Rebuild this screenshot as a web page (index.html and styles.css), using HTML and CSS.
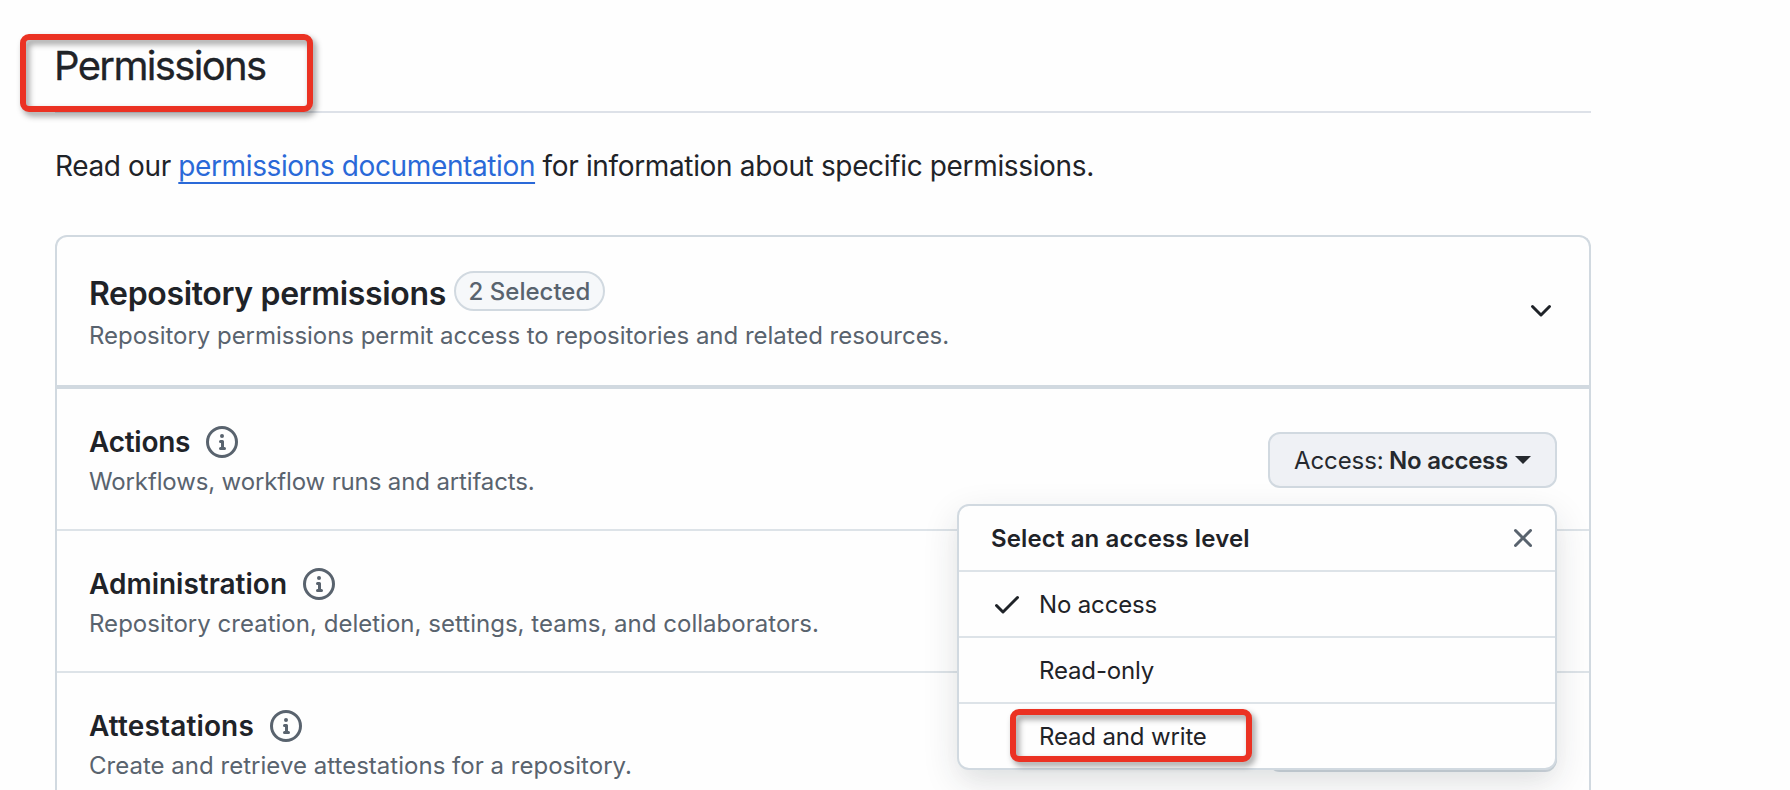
FILE: index.html
```
<!DOCTYPE html>
<html lang="en">
<head>
<meta charset="utf-8">
<title>Permissions</title>
<link rel="stylesheet" href="styles.css">
</head>
<body>
<svg class="sprite" aria-hidden="true">
  <symbol id="info" viewBox="0 0 16 16"><path d="M0 8a8 8 0 1 1 16 0A8 8 0 0 1 0 8Zm8-6.5a6.5 6.5 0 1 0 0 13 6.5 6.5 0 0 0 0-13ZM6.5 7.75A.75.75 0 0 1 7.25 7h1a.75.75 0 0 1 .75.75v2.75h.25a.75.75 0 0 1 0 1.5h-2a.75.75 0 0 1 0-1.5h.25v-2h-.25a.75.75 0 0 1-.75-.75ZM8 6a1 1 0 1 1 0-2 1 1 0 0 1 0 2Z"/></symbol>
  <symbol id="chevron" viewBox="0 0 16 16"><path d="M12.78 5.22a.749.749 0 0 1 0 1.06l-4.25 4.25a.749.749 0 0 1-1.06 0L3.22 6.28a.749.749 0 1 1 1.06-1.06L8 8.939l3.72-3.719a.749.749 0 0 1 1.06 0Z"/></symbol>
  <symbol id="check" viewBox="0 0 16 16"><path d="M13.78 4.22a.75.75 0 0 1 0 1.06l-7.25 7.25a.75.75 0 0 1-1.06 0L2.22 9.28a.751.751 0 0 1 .018-1.042.751.751 0 0 1 1.042-.018L6 10.94l6.72-6.72a.75.75 0 0 1 1.06 0Z"/></symbol>
  <symbol id="close" viewBox="0 0 16 16"><path d="M3.72 3.72a.75.75 0 0 1 1.06 0L8 6.94l3.22-3.22a.749.749 0 0 1 1.275.326.749.749 0 0 1-.215.734L9.06 8l3.22 3.22a.749.749 0 0 1-.326 1.275.749.749 0 0 1-.734-.215L8 9.06l-3.22 3.22a.751.751 0 0 1-1.042-.018.751.751 0 0 1-.018-1.042L6.94 8 3.72 4.78a.75.75 0 0 1 0-1.06Z"/></symbol>
</svg>
<main class="page">
  <header class="subhead">
    <h2 class="subhead-title">Permissions</h2>
    <span class="mark mark-title"></span>
  </header>
  <p class="intro">Read our <a class="link" href="#">permissions documentation</a><span class="intro-rest"> for information about specific permissions.</span></p>
  <section class="card">
    <div class="card-head">
      <div class="card-text">
        <div class="card-title-row"><h3 class="card-title">Repository permissions</h3><span class="badge">2 Selected</span></div>
        <p class="desc">Repository permissions permit access to repositories and related resources.</p>
      </div>
      <svg class="icon chevron"><use href="#chevron"/></svg>
    </div>
    <div class="row">
      <div>
        <div class="row-title tight">Actions<svg class="icon"><use href="#info"/></svg></div>
        <p class="desc tight">Workflows, workflow runs and artifacts.</p>
      </div>
      <div class="access">
        <button class="button"><span class="label">Access:</span><b class="value">No access</b><i class="caret"></i></button>
        <div class="menu">
          <div class="menu-head"><b class="menu-title">Select an access level</b><svg class="icon"><use href="#close"/></svg></div>
          <div class="item"><svg class="check"><use href="#check"/></svg>No access</div>
          <div class="item"><span class="check"></span>Read-only</div>
          <div class="item"><span class="check"></span>Read and write<span class="mark mark-item"></span></div>
        </div>
      </div>
    </div>
    <div class="row">
      <div>
        <div class="row-title">Administration<svg class="icon"><use href="#info"/></svg></div>
        <p class="desc loose">Repository creation, deletion, settings, teams, and collaborators.</p>
      </div>
      <div class="access"><button class="button"></button></div>
    </div>
    <div class="row">
      <div>
        <div class="row-title wide">Attestations<svg class="icon"><use href="#info"/></svg></div>
        <p class="desc loose">Create and retrieve attestations for a repository.</p>
      </div>
      <div class="access"><button class="button"></button></div>
    </div>
  </section>
</main>
</body>
</html>
```
FILE: styles.css
```
* { box-sizing: border-box; }
html, body { height: 100%; overflow: hidden; }
body { margin: 0; background: #fefefe; color: #1f2328; font-family: Inter, "Liberation Sans", sans-serif; font-size: 24px; }
h2, h3, p { margin: 0; }
.sprite { position: absolute; width: 0; height: 0; }
.icon { width: 32px; height: 32px; fill: #59636e; flex: none; }
.page { width: 1536px; height: 790px; margin-left: 55px; }
.subhead { position: relative; height: 113px; border-bottom: 2px solid #dde1e8; }
.subhead-title { margin-left: -1px; padding-top: 36px; font-size: 40px; line-height: 60px; font-weight: 400; letter-spacing: -1.65px; -webkit-text-stroke: .3px; }
.intro { height: 122px; padding-top: 32px; font-size: 28px; line-height: 42px; white-space: pre; letter-spacing: -.38px; }
.intro-rest { letter-spacing: -.35px; }
.link { color: #2a69d8; text-decoration: underline; text-decoration-thickness: 2px; text-underline-offset: 6px; text-decoration-skip-ink: none; }
.card { height: 555px; border: 2px solid #d1d9e0; border-bottom: 0; border-radius: 12px 12px 0 0; }
.card-head { display: flex; justify-content: space-between; align-items: center; height: 152px; padding: 0 32px; border-bottom: 4px solid #d1d9e0; }
.card-text { display: flex; flex-direction: column; gap: 6px; height: 80px; }
.card-title-row { display: flex; align-items: center; gap: 8px; height: 40px; }
.card-title { font-size: 32px; line-height: 40px; font-weight: 600; padding-top: 5px; letter-spacing: -.35px; }
.badge { display: flex; justify-content: center; width: 151px; height: 40px; padding-top: 1px; border: 2px solid #d1d9e0; border-radius: 20px; background: #f6f8fa; color: #59636e; line-height: 36px; font-weight: 500; letter-spacing: 0; white-space: nowrap; }
.desc { padding-top: 1px; color: #59636e; line-height: 36px; white-space: nowrap; letter-spacing: -.03px; }
.desc.tight { letter-spacing: -.13px; }
.desc.loose { letter-spacing: .02px; }
.chevron { fill: #1f2328; }
.row { display: flex; justify-content: space-between; height: 142px; padding: 32px 32px 0; border-bottom: 2px solid #dde3e8; }
.row:last-child { height: 119px; border-bottom: 0; }
.row-title { display: flex; align-items: center; gap: 16px; height: 42px; font-size: 28px; font-weight: 600; }
.row-title.tight { letter-spacing: -.27px; }
.row-title.wide { letter-spacing: .15px; }
.access { position: relative; padding-top: 11px; }
.button { display: flex; align-items: center; width: 289px; height: 56px; padding: 0 24px; border: 2px solid #d1d9e0; border-radius: 12px; background: #eff1f5; color: #25292e; font: 400 24px Inter, "Liberation Sans", sans-serif; text-align: left; white-space: nowrap; }
.label { width: 95px; letter-spacing: -.1px; }
.value { width: 119px; font-weight: 600; letter-spacing: -.25px; }
.caret { margin-left: 7px; border: 8px solid transparent; border-top-color: #25292e; border-bottom: 0; }
.menu { position: absolute; z-index: 2; right: 0; top: 83px; width: 600px; border: 2px solid #d1d9e0; border-radius: 12px; background: #fefefe; box-shadow: 0 12px 24px -6px #25292e0a, 0 12px 36px #25292e1f; }
.menu-head { display: flex; align-items: center; justify-content: space-between; height: 64px; padding: 0 16px 0 32px; }
.menu-title { font-weight: 600; letter-spacing: .13px; }
.item { position: relative; display: flex; align-items: center; height: 66px; padding-left: 32px; border-top: 2px solid #dde3e8; letter-spacing: -.15px; }
.check { width: 32px; height: 32px; margin-right: 16px; fill: #1f2328; }
.mark { position: absolute; z-index: 3; border: 6px solid #eb3223; border-radius: 9px; filter: drop-shadow(3px 4px 3px #0006); }
.mark-title { left: -35px; top: 34px; width: 293px; height: 78px; }
.mark-item { left: 51px; top: 5px; width: 242px; height: 53px; }
```
